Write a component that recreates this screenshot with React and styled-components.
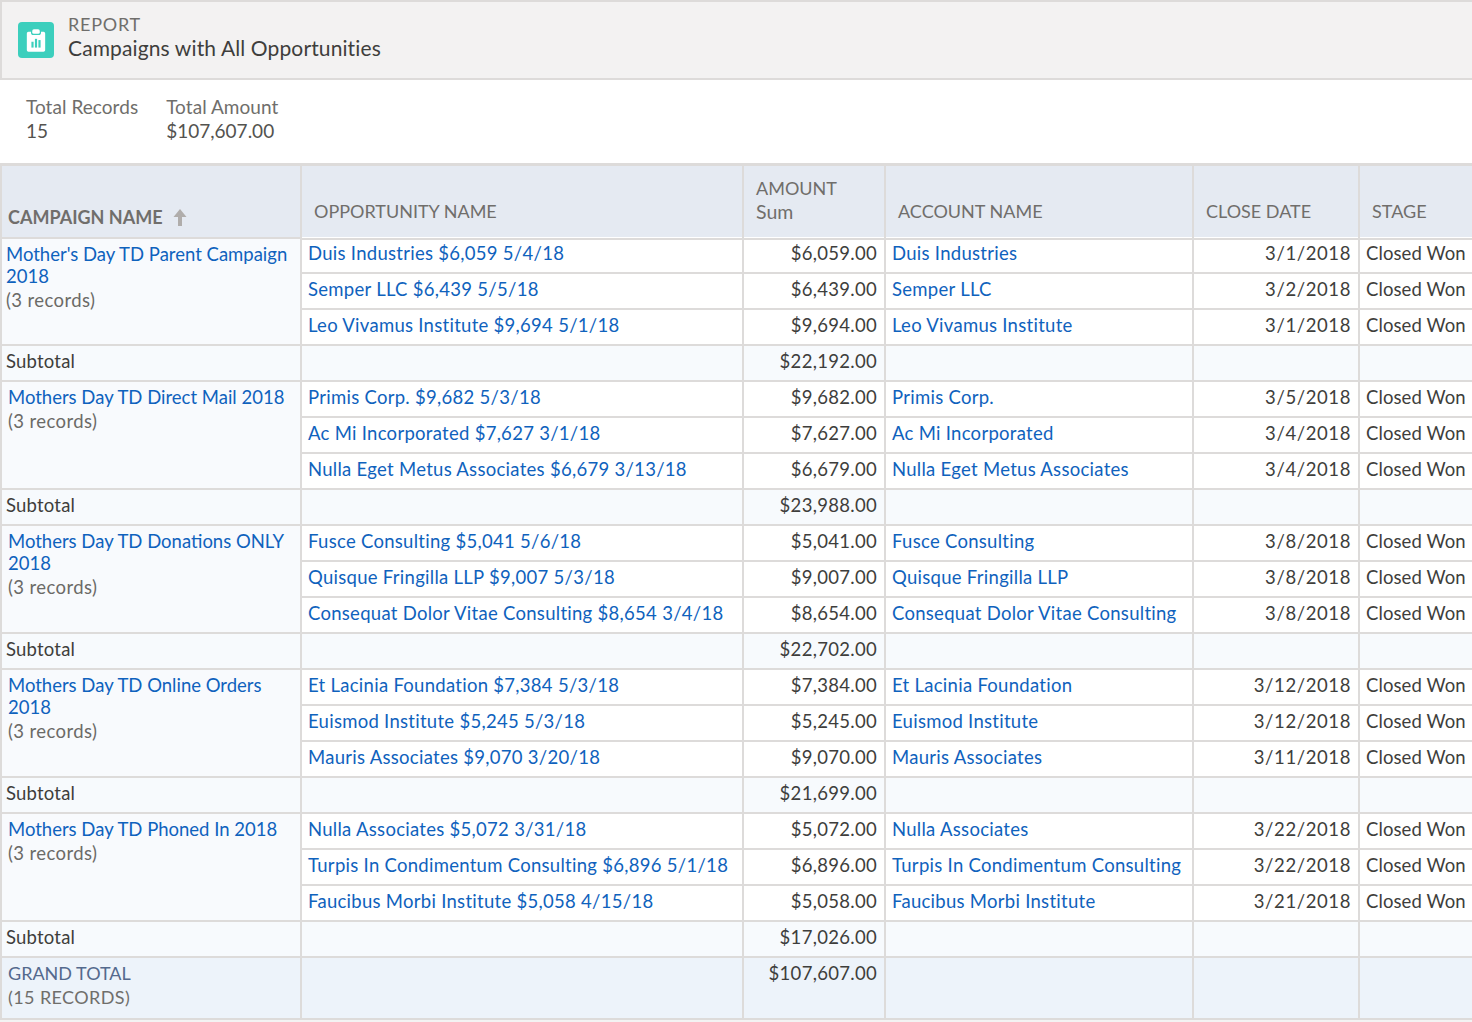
import React from "react";
import styled, { createGlobalStyle } from "styled-components";

const GlobalStyle = createGlobalStyle`
	html, body {
		margin: 0;
		padding: 0;
		background: #f3f3f3;
	}
	body {
		font-family: "Lato", "Liberation Sans", sans-serif;
		color: #3e3e3c;
		overflow-x: hidden;
	}
`;

const Page = styled.div`
	width: 1472px;
	height: 1022px;
	overflow: hidden;
`;

const Header = styled.header`
	box-sizing: border-box;
	height: 80px;
	display: flex;
	align-items: center;
	gap: 14px;
	padding: 0 0 0 16px;
	background: #f3f2f2;
	border-top: 2px solid #dddbda;
	border-left: 2px solid #dddbda;
	border-bottom: 2px solid #dddbda;
`;

const IconTile = styled.div`
	width: 36px;
	height: 36px;
	flex: none;
	border-radius: 4px;
	background: #3ccfbd;
	display: flex;
	align-items: center;
	justify-content: center;
`;

const HeaderText = styled.div`
	display: flex;
	flex-direction: column;
	padding-bottom: 7px;
`;

const Eyebrow = styled.div`
	font-size: 18px;
	line-height: normal;
	letter-spacing: 0.75px;
	color: #6f6e6b;
`;

const PageTitle = styled.h1`
	margin: 0;
	font-size: 21px;
	line-height: normal;
	letter-spacing: 0.12px;
	font-weight: 400;
	color: #3e3e3c;
`;

const Summary = styled.section`
	box-sizing: border-box;
	height: 83px;
	display: flex;
	gap: 28px;
	padding: 15px 26px 0;
	background: #fff;
`;

const Metric = styled.div`
	display: flex;
	flex-direction: column;
`;

const MetricLabel = styled.div`
	font-size: 19px;
	line-height: 24px;
	letter-spacing: 0.05px;
	color: #6f6e6b;
`;

const MetricValue = styled.div`
	font-size: 19px;
	line-height: 24px;
	color: #54534f;
`;

const Table = styled.table`
	table-layout: fixed;
	width: 1472px;
	border-collapse: separate;
	border-spacing: 0;
	border-top: 3px solid #dddbda;
	background: #fff;
	font-size: 18.5px;
`;

const Head = styled.th`
	box-sizing: border-box;
	height: 74px;
	padding: 0;
	vertical-align: top;
	text-align: left;
	font-weight: 400;
	font-size: 18px;
	border-right: 2px solid #dddbda;
	border-bottom: ${(p) => (p.$sorted ? "none" : "2px solid #dddbda")};
	border-left: ${(p) => (p.$first ? "2px solid #dddbda" : "none")};
	background: ${(p) => (p.$sorted ? "#f8fafd" : "#fff")};
	&:last-child {
		border-right: none;
	}
`;

const HeadFill = styled.div`
	box-sizing: border-box;
	height: ${(p) => (p.$sorted ? "73px" : "71px")};
	display: flex;
	flex-direction: column;
	justify-content: flex-end;
	padding: 0 0 ${(p) => (p.$sorted ? "8px" : "14px")} ${(p) => (p.$sorted ? "6px" : "12px")};
	background: #e5eaf2;
	border-bottom: ${(p) => (p.$sorted ? "2px solid #dddbda" : "none")};
	color: #706e6b;
	line-height: 23px;
	font-weight: ${(p) => (p.$sorted ? 700 : 400)};
`;

const HeadSub = styled.div`
	font-size: 19.5px;
`;

const SortArrow = styled.svg`
	width: 14px;
	height: 17px;
	margin-left: 10px;
	vertical-align: -2px;
`;

const Cell = styled.td`
	box-sizing: border-box;
	height: ${(p) => (p.$lead ? "34px" : "36px")};
	padding: ${(p) => (p.$lead ? "1px" : "3px")} 7px 0 6px;
	vertical-align: top;
	line-height: 24px;
	white-space: nowrap;
	overflow: hidden;
	text-align: ${(p) => (p.$right ? "right" : "left")};
	letter-spacing: ${(p) => p.$spacing || "0"};
	border-right: 2px solid #dddbda;
	border-bottom: 2px solid #dddbda;
	background: ${(p) => (p.$shade ? "#f7fafd" : "#fff")};
	&:last-child {
		border-right: none;
	}
`;

const CampaignCell = styled.td`
	box-sizing: border-box;
	padding: ${(p) => (p.$tight ? "3px" : "4px")} 4px 0 ${(p) => (p.$tight ? "4px" : "6px")};
	vertical-align: top;
	border-left: 2px solid #dddbda;
	border-right: 2px solid #dddbda;
	border-bottom: 2px solid #dddbda;
	background: #f8fafd;
	line-height: 22px;
`;

const SubtotalLabel = styled(Cell)`
	padding-left: 4px;
	letter-spacing: 0.2px;
	border-left: 2px solid #dddbda;
`;

const Records = styled.div`
	line-height: 26px;
	letter-spacing: 0.4px;
	color: #6b6a67;
`;

const Link = styled.a`
	color: #0f62bd;
	text-decoration: none;
`;

const GrandCell = styled.td`
	box-sizing: border-box;
	height: 62px;
	padding: 3px 7px 0 6px;
	vertical-align: top;
	text-align: ${(p) => (p.$right ? "right" : "left")};
	line-height: 24px;
	letter-spacing: ${(p) => (p.$right ? "0.3px" : "0")};
	background: #edf3fa;
	border-right: 2px solid #dddbda;
	border-bottom: 2px solid #dddbda;
	&:last-child {
		border-right: none;
	}
`;

const GrandLabel = styled(GrandCell)`
	border-left: 2px solid #dddbda;
	font-size: 18px;
	color: #6f6e6b;
	letter-spacing: 0.4px;
	& > span {
		color: #54698d;
		letter-spacing: 0;
	}
`;

const groups = [
	{
		name: "Mother's Day TD Parent Campaign 2018",
		subtotal: "$22,192.00",
		tight: true,
		rows: [
			["Duis Industries", "$6,059", "5/4/18", "$6,059.00", "3/1/2018"],
			["Semper LLC", "$6,439", "5/5/18", "$6,439.00", "3/2/2018"],
			["Leo Vivamus Institute", "$9,694", "5/1/18", "$9,694.00", "3/1/2018"],
		],
	},
	{
		name: "Mothers Day TD Direct Mail 2018",
		subtotal: "$23,988.00",
		rows: [
			["Primis Corp.", "$9,682", "5/3/18", "$9,682.00", "3/5/2018"],
			["Ac Mi Incorporated", "$7,627", "3/1/18", "$7,627.00", "3/4/2018"],
			["Nulla Eget Metus Associates", "$6,679", "3/13/18", "$6,679.00", "3/4/2018"],
		],
	},
	{
		name: "Mothers Day TD Donations ONLY 2018",
		subtotal: "$22,702.00",
		rows: [
			["Fusce Consulting", "$5,041", "5/6/18", "$5,041.00", "3/8/2018"],
			["Quisque Fringilla LLP", "$9,007", "5/3/18", "$9,007.00", "3/8/2018"],
			["Consequat Dolor Vitae Consulting", "$8,654", "3/4/18", "$8,654.00", "3/8/2018"],
		],
	},
	{
		name: "Mothers Day TD Online Orders 2018",
		subtotal: "$21,699.00",
		rows: [
			["Et Lacinia Foundation", "$7,384", "5/3/18", "$7,384.00", "3/12/2018"],
			["Euismod Institute", "$5,245", "5/3/18", "$5,245.00", "3/12/2018"],
			["Mauris Associates", "$9,070", "3/20/18", "$9,070.00", "3/11/2018"],
		],
	},
	{
		name: "Mothers Day TD Phoned In 2018",
		subtotal: "$17,026.00",
		rows: [
			["Nulla Associates", "$5,072", "3/31/18", "$5,072.00", "3/22/2018"],
			["Turpis In Condimentum Consulting", "$6,896", "5/1/18", "$6,896.00", "3/22/2018"],
			["Faucibus Morbi Institute", "$5,058", "4/15/18", "$5,058.00", "3/21/2018"],
		],
	},
];

const ReportIcon = () => (
	<svg width="20" height="23" viewBox="0 0 24 27">
		<path fill="#fff" d="M3 3h3v1.500c0 1.400 1.100 2.500 2.500 2.500h7c1.400 0 2.500-1.100 2.500-2.500V3h3c1.100 0 2 .9 2 2v20c0 1.100-.9 2-2 2H3c-1.100 0-2-.9-2-2V5c0-1.100.9-2 2-2z" />
		<rect x="7.500" y="0" width="9" height="5.500" rx="2" fill="#fff" />
		<rect x="6.500" y="15" width="2.600" height="7" fill="#3ccfbd" />
		<rect x="10.700" y="11.500" width="2.600" height="10.500" fill="#3ccfbd" />
		<rect x="14.900" y="13" width="2.600" height="9" fill="#3ccfbd" />
	</svg>
);

const App = () => {
	return (
		<Page>
			<GlobalStyle />
			<Header>
				<IconTile>
					<ReportIcon />
				</IconTile>
				<HeaderText>
					<Eyebrow>REPORT</Eyebrow>
					<PageTitle>Campaigns with All Opportunities</PageTitle>
				</HeaderText>
			</Header>
			<Summary>
				<Metric>
					<MetricLabel>Total Records</MetricLabel>
					<MetricValue>15</MetricValue>
				</Metric>
				<Metric>
					<MetricLabel>Total Amount</MetricLabel>
					<MetricValue>$107,607.00</MetricValue>
				</Metric>
			</Summary>
			<Table>
				<colgroup>
					<col width="302" />
					<col width="442" />
					<col width="142" />
					<col width="308" />
					<col width="166" />
					<col width="112" />
				</colgroup>
				<thead>
					<tr>
						<Head $first $sorted>
							<HeadFill $sorted>
								<div>
									CAMPAIGN NAME
									<SortArrow viewBox="0 0 14 17">
										<path fill="#b0adab" d="M7 0l6.500 8H9v9H5V8H.5z" />
									</SortArrow>
								</div>
							</HeadFill>
						</Head>
						<Head>
							<HeadFill>OPPORTUNITY NAME</HeadFill>
						</Head>
						<Head>
							<HeadFill>
								<div>AMOUNT</div>
								<HeadSub>Sum</HeadSub>
							</HeadFill>
						</Head>
						<Head>
							<HeadFill>ACCOUNT NAME</HeadFill>
						</Head>
						<Head>
							<HeadFill>CLOSE DATE</HeadFill>
						</Head>
						<Head>
							<HeadFill>STAGE</HeadFill>
						</Head>
					</tr>
				</thead>
				<tbody>
					{groups.map((group, g) => (
						<React.Fragment key={group.name}>
							{group.rows.map((row, i) => {
								const lead = g === 0 && i === 0;
								return (
									<tr key={row[0]}>
										{i === 0 && (
											<CampaignCell rowSpan={3} $tight={group.tight}>
												<Link href="#">{group.name}</Link>
												<Records>(3 records)</Records>
											</CampaignCell>
										)}
										<Cell $lead={lead} $spacing="0.28px">
											<Link href="#">
												{row[0]} {row[1]} {row[2]}
											</Link>
										</Cell>
										<Cell $lead={lead} $right $spacing="0.3px">
											{row[3]}
										</Cell>
										<Cell $lead={lead} $spacing="0.28px">
											<Link href="#">{row[0]}</Link>
										</Cell>
										<Cell $lead={lead} $right $spacing="0.6px">
											{row[4]}
										</Cell>
										<Cell $lead={lead} $spacing="0.1px">
											Closed Won
										</Cell>
									</tr>
								);
							})}
							<tr>
								<SubtotalLabel $shade>Subtotal</SubtotalLabel>
								<Cell $shade />
								<Cell $shade $right $spacing="0.3px">
									{group.subtotal}
								</Cell>
								<Cell $shade />
								<Cell $shade />
								<Cell $shade />
							</tr>
						</React.Fragment>
					))}
					<tr>
						<GrandLabel>
							<span>GRAND TOTAL</span>
							<br />
							(15 RECORDS)
						</GrandLabel>
						<GrandCell />
						<GrandCell $right>$107,607.00</GrandCell>
						<GrandCell />
						<GrandCell />
						<GrandCell />
					</tr>
				</tbody>
			</Table>
		</Page>
	);
};

export default App;
